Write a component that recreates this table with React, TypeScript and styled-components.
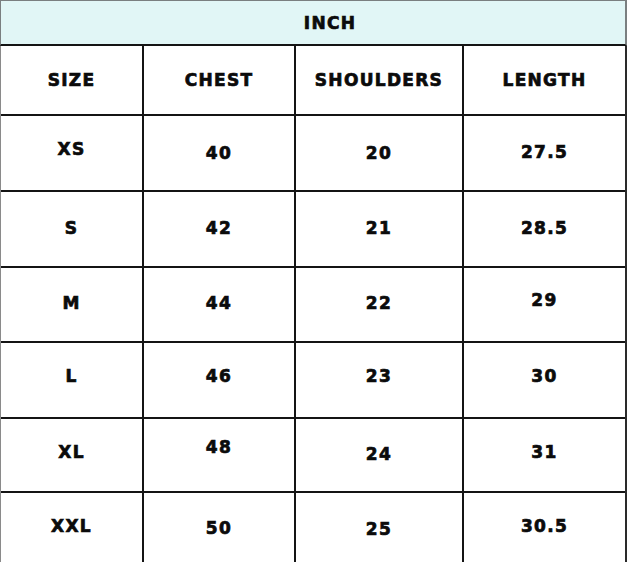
import styled, { createGlobalStyle } from "styled-components"

const GlobalStyle = createGlobalStyle`
    html, body {
        margin: 0;
        padding: 0;
        background: #ffffff;
    }
`

type Row = { cells: string[]; shifts: number[] }

const headings = ["SIZE", "CHEST", "SHOULDERS", "LENGTH"]

const rows: Row[] = [
    { cells: ["XS", "40", "20", "27.5"], shifts: [-4, 0, 0, -1] },
    { cells: ["S", "42", "21", "28.5"], shifts: [-1, -1, -1, -1] },
    { cells: ["M", "44", "22", "29"], shifts: [-1, -1, -1, -4] },
    { cells: ["L", "46", "23", "30"], shifts: [-4, -4, -4, -4] },
    { cells: ["XL", "48", "24", "31"], shifts: [-3, -8, -1, -3] },
    { cells: ["XXL", "50", "25", "30.5"], shifts: [-3, -1, 0, -3] },
]

export default function App() {
    return (
        <>
            <GlobalStyle />
            <Chart>
                <TitleBar>INCH</TitleBar>
                <Grid>
                    {headings.map((h) => (
                        <Cell key={h} $shift={0}>{h}</Cell>
                    ))}
                    {rows.map((row) =>
                        row.cells.map((value, i) => (
                            <Cell key={row.cells[0] + i} $shift={row.shifts[i]}>
                                {value}
                            </Cell>
                        ))
                    )}
                </Grid>
            </Chart>
        </>
    )
}

const Chart = styled.div`
    width: 627px;
    height: 562px;
    overflow: hidden;
    font-family: "DejaVu Sans", "Liberation Sans", sans-serif;
    font-weight: 700;
    color: #0b0b0b;
    -webkit-text-stroke: 0.7px #0b0b0b;
`

const TitleBar = styled.div`
    box-sizing: border-box;
    height: 46px;
    display: flex;
    align-items: center;
    justify-content: center;
    background-color: #e1f6f6;
    border: 1px solid #7a7f80;
    border-right-width: 2px;
    border-bottom: 2px solid #141414;
    font-size: 17px;
    letter-spacing: 1.3px;
    padding-left: 34px;
`

const Grid = styled.div`
    display: grid;
    grid-template-columns: 141px 150px 166px 161px;
    grid-template-rows: 68px 74px 74px 73px 74px 72px 72px;
    gap: 2px;
    background-color: #141414;
    border-left: 1px solid #8a8a8a;
    border-right: 2px solid #2a2a2a;
`

const Cell = styled.div<{ $shift: number }>`
    box-sizing: border-box;
    display: flex;
    align-items: center;
    justify-content: center;
    background-color: #ffffff;
    font-size: 17px;
    line-height: 1;
    letter-spacing: 1.3px;
    padding-bottom: ${(p) => (p.$shift < 0 ? -p.$shift * 2 : 0)}px;
`
